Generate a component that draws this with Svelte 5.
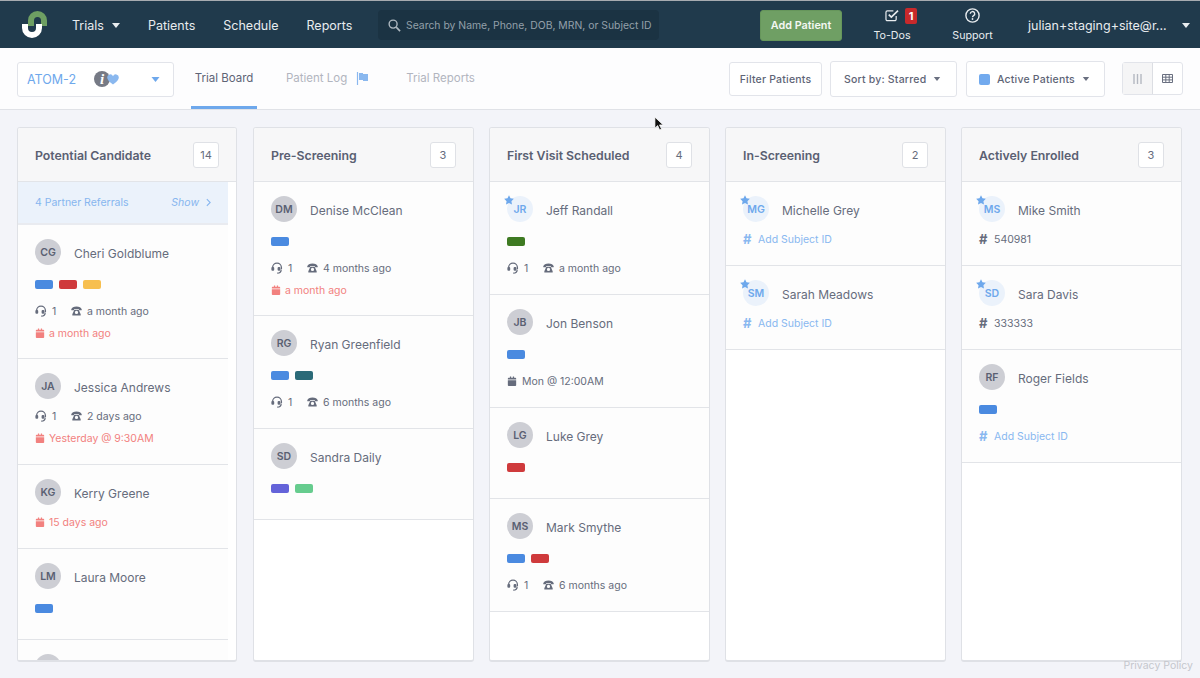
<script>
  const columns = [
    { title: 'Potential Candidate', count: 14, gutter: true, referral: true, cards: [
      { i: 'CG', name: 'Cheri Goldblume', tags: ['blue','red','yellow'], calls: 1, phone: 'a month ago', due: 'a month ago' },
      { i: 'JA', name: 'Jessica Andrews', calls: 1, phone: '2 days ago', due: 'Yesterday @ 9:30AM' },
      { i: 'KG', name: 'Kerry Greene', due: '15 days ago' },
      { i: 'LM', name: 'Laura Moore', tags: ['blue'] },
      { i: '', name: '' }
    ]},
    { title: 'Pre-Screening', count: 3, cards: [
      { i: 'DM', name: 'Denise McClean', tags: ['blue'], calls: 1, phone: '4 months ago', due: 'a month ago' },
      { i: 'RG', name: 'Ryan Greenfield', tags: ['blue','teal'], calls: 1, phone: '6 months ago' },
      { i: 'SD', name: 'Sandra Daily', tags: ['indigo','green'] }
    ]},
    { title: 'First Visit Scheduled', count: 4, cards: [
      { i: 'JR', star: true, name: 'Jeff Randall', tags: ['forest'], calls: 1, phone: 'a month ago' },
      { i: 'JB', name: 'Jon Benson', tags: ['blue'], visit: 'Mon @ 12:00AM' },
      { i: 'LG', name: 'Luke Grey', tags: ['red'] },
      { i: 'MS', name: 'Mark Smythe', tags: ['blue','red'], calls: 1, phone: '6 months ago' }
    ]},
    { title: 'In-Screening', count: 2, cards: [
      { i: 'MG', star: true, name: 'Michelle Grey', addId: true },
      { i: 'SM', star: true, name: 'Sarah Meadows', addId: true }
    ]},
    { title: 'Actively Enrolled', count: 3, cards: [
      { i: 'MS', star: true, name: 'Mike Smith', subject: '540981' },
      { i: 'SD', star: true, name: 'Sara Davis', subject: '333333' },
      { i: 'RF', name: 'Roger Fields', tags: ['blue'], addId: true }
    ]}
  ];
</script>

{#snippet caret()}
  <svg class="caret" viewBox="0 0 8 5" width="8" height="5"><path d="M0 0h8L4 5z" fill="currentColor"/></svg>
{/snippet}
{#snippet calendar()}
  <svg viewBox="0 0 12 12" width="10" height="11"><path fill="currentColor" d="M1 4.500h10v6a1 1 0 0 1-1 1H2a1 1 0 0 1-1-1zM2 1.500h1.500V0h1.500v1.500h2V0h1.500v1.500H10a1 1 0 0 1 1 1v1H1v-1a1 1 0 0 1 1-1z"/></svg>
{/snippet}

<div class="page">
  <header class="top">
    <svg class="logo" viewBox="0 0 26 28" width="26" height="28">
      <path d="M6 15V9.500a9.500 9.500 0 0 1 19 0V15h-6V9.500a3.500 3.500 0 0 0-7 0V15z" fill="#6e9f63"/>
      <path d="M0 13h6v4a4 4 0 0 0 8 0v-4h6v4a10 10 0 0 1-20 0z" fill="#fff"/>
    </svg>
    <nav class="nav">
      <span class="navitem">Trials {@render caret()}</span>
      <span class="navitem">Patients</span>
      <span class="navitem">Schedule</span>
      <span class="navitem">Reports</span>
    </nav>
    <div class="search">
      <svg viewBox="0 0 14 14" width="13" height="13"><circle cx="5.500" cy="5.500" r="4.300" fill="none" stroke="currentColor" stroke-width="1.500"/><path d="M8.800 8.800 13 13" stroke="currentColor" stroke-width="1.800"/></svg>
      <span>Search by Name, Phone, DOB, MRN, or Subject ID</span>
    </div>
    <button class="add">Add Patient</button>
    <div class="hicon todos">
      <div class="iconrow">
        <svg viewBox="0 0 15 14" width="14" height="13"><path d="M12 7.500V11a1.500 1.500 0 0 1-1.500 1.500h-8A1.500 1.500 0 0 1 1 11V3.500A1.500 1.500 0 0 1 2.500 2H9" fill="none" stroke="#e8ecef" stroke-width="1.300"/><path d="M4 6l2.800 2.800L14 1.800" fill="none" stroke="#e8ecef" stroke-width="1.800"/></svg>
        <span class="badge">1</span>
      </div>
      <span>To-Dos</span>
    </div>
    <div class="hicon support">
      <div class="iconrow">
        <svg viewBox="0 0 15 15" width="15" height="15"><circle cx="7.500" cy="7.500" r="6.600" fill="none" stroke="#e8ecef" stroke-width="1.400"/><path d="M5.300 5.800a2.200 2.200 0 1 1 3.300 1.900c-.7.400-1.100.8-1.100 1.500" fill="none" stroke="#e8ecef" stroke-width="1.400"/><circle cx="7.500" cy="11" r=".9" fill="#e8ecef"/></svg>
      </div>
      <span>Support</span>
    </div>
    <div class="user"><span>julian+staging+site@r...</span>{@render caret()}</div>
  </header>

  <div class="sub">
    <div class="trial">
      <span class="trialname">ATOM-2</span>
      <span class="infoheart">
        <span class="info">i</span>
        <svg viewBox="0 0 12 11" width="12" height="11"><path d="M6 10.500C2 7.500.2 5.700.2 3.500A3 3 0 0 1 6 2.300a3 3 0 0 1 5.800 1.200C11.800 5.700 10 7.500 6 10.500z" fill="#8ab8ef"/></svg>
      </span>
      <span class="trialcaret">{@render caret()}</span>
    </div>
    <div class="tabs">
      <span class="tab active">Trial Board</span>
      <span class="tab log">Patient Log
        <svg viewBox="0 0 13 13" width="13" height="13"><path d="M1.500 0v13" stroke="#8ab8ef" stroke-width="1.200"/><path d="M3 1h4v1h5v7H7V8H3z" fill="#8ab8ef"/></svg>
      </span>
      <span class="tab reports">Trial Reports</span>
    </div>
    <div class="tools">
      <button class="tool filter">Filter Patients</button>
      <button class="tool sort">Sort by: Starred {@render caret()}</button>
      <button class="tool status"><i class="swatch"></i>Active Patients {@render caret()}</button>
      <div class="views">
        <span class="view on"><svg viewBox="0 0 9 10" width="9" height="10"><path d="M1 0v10M4.500 0v10M8 0v10" stroke="#b4b8c1" stroke-width="1.400"/></svg></span>
        <span class="view"><svg viewBox="0 0 11 9" width="11" height="9"><path d="M.5.500h10v8H.5zM.5 3.200h10M.5 5.900h10M3.800.500v8M7.200.500v8" fill="none" stroke="#6a7080" stroke-width="1"/></svg></span>
      </div>
    </div>
  </div>

  <main class="board">
    {#each columns as col}
      <section class="col">
        <div class="colhead">
          <h2>{col.title}</h2>
          <span class="count">{col.count}</span>
        </div>
        <div class="list" class:gutter={col.gutter}>
          {#if col.referral}
            <div class="referral">
              <span>4 Partner Referrals</span>
              <em>Show
                <svg viewBox="0 0 6 10" width="5" height="9"><path d="M1 1l4 4-4 4" fill="none" stroke="currentColor" stroke-width="1.300"/></svg>
              </em>
            </div>
          {/if}
          {#each col.cards as c}
            <article class="card">
              <div class="who">
                <span class="avatar" class:starred={c.star}>
                  {c.i}
                  {#if c.star}
                    <svg class="star" viewBox="0 0 12 12" width="10" height="10"><path d="M6 .3l1.800 3.700 4 .6-2.900 2.800.7 4L6 9.500l-3.600 1.900.7-4L.2 4.600l4-.6z" fill="#6ea8ec"/></svg>
                  {/if}
                </span>
                <span class="name">{c.name}</span>
              </div>
              {#if c.tags}
                <div class="tags">
                  {#each c.tags as t}<i class="tag {t}"></i>{/each}
                </div>
              {/if}
              {#if c.calls}
                <div class="row meta">
                  <svg viewBox="0 0 12 12" width="12" height="12"><path d="M1.600 7V5.500a4.400 4.400 0 0 1 8.800 0V7" fill="none" stroke="currentColor" stroke-width="1.300"/><rect x=".4" y="5" width="2.800" height="3.800" rx="1" fill="currentColor"/><rect x="6.600" y="5" width="2.800" height="3.800" rx="1" fill="currentColor"/><path d="M10.200 7.500c0 2.400-1.700 3.700-4 3.700" fill="none" stroke="currentColor" stroke-width="1.200"/></svg>
                  <span class="calls">{c.calls}</span>
                  <svg viewBox="0 0 12 11" width="11" height="10"><path fill="currentColor" d="M.2 3.800C.7 1.700 3 .6 6 .6s5.300 1.100 5.800 3.200c.1.500 0 .9-.6.900H9.300c-.5 0-.7-.3-.7-1.500H3.400c0 1.200-.2 1.500-.7 1.500H.8C.2 4.700.1 4.300.2 3.800zM3.600 4h4.800l2.200 5v1.500H1.400V9zM6 5.300a1.800 1.800 0 1 0 0 3.600 1.800 1.800 0 0 0 0-3.600z"/></svg>
                  <span>{c.phone}</span>
                </div>
              {/if}
              {#if c.due}
                <div class="row due">{@render calendar()}<span>{c.due}</span></div>
              {/if}
              {#if c.visit}
                <div class="row meta">{@render calendar()}<span>{c.visit}</span></div>
              {/if}
              {#if c.addId}
                <div class="row add-id"><b>#</b><span>Add Subject ID</span></div>
              {/if}
              {#if c.subject}
                <div class="row subject"><b>#</b><span>{c.subject}</span></div>
              {/if}
            </article>
          {/each}
        </div>
      </section>
    {/each}
  </main>

  <a class="privacy" href="#privacy">Privacy Policy</a>
  <svg class="cursor" viewBox="0 0 12 17" width="11" height="16"><path d="M1 1v12l3-2.800L6.200 15l2-1-2.200-4.500h4z" fill="#111" stroke="#fff" stroke-width=".8"/></svg>
</div>

<style>
  :global(body) { margin: 0; background: #f3f4f9; }
  .page {
    position: relative;
    width: 1200px;
    height: 678px;
    overflow: hidden;
    background: #f3f4f9;
    font-family: Inter, "Liberation Sans", sans-serif;
    font-size: 11px;
    color: #5e6476;
  }
  button { font-family: inherit; cursor: pointer; }

  .top {
    height: 48px;
    box-sizing: border-box;
    border-top: 1px solid #a7abb0;
    padding-top: 1px;
    background: #203a4c;
    display: flex;
    align-items: center;
    color: #e8ecef;
    font-size: 12.500px;
  }
  .logo { margin-left: 22px; flex: none; }
  .nav { display: flex; gap: 28px; margin-left: 24px; width: 306px; flex: none; }
  .navitem { display: inline-flex; align-items: center; gap: 6px; white-space: nowrap; }
  .navitem .caret { margin-left: 2px; }
  .search {
    width: 281px;
    height: 30px;
    flex: none;
    box-sizing: border-box;
    background: #1b3343;
    border-radius: 4px;
    display: flex;
    align-items: center;
    gap: 5px;
    padding-left: 10px;
    font-size: 10.400px;
    color: #93a0aa;
    white-space: nowrap;
  }
  .search svg { color: #aeb8c0; flex: none; }
  .add {
    margin-left: 101px;
    width: 82px;
    height: 31px;
    flex: none;
    border: 1px solid #66965b;
    border-radius: 3px;
    background: #6f9f64;
    color: #f4f7f3;
    font-size: 10.800px;
    font-weight: 600;
    padding: 0;
  }
  .hicon {
    display: flex;
    flex-direction: column;
    align-items: center;
    font-size: 10.700px;
    gap: 4px;
    white-space: nowrap;
    padding-top: 1px;
    margin-bottom: 3px;
    flex: none;
  }
  .iconrow { height: 18px; display: flex; align-items: center; gap: 6px; }
  .todos { margin-left: 31px; width: 38px; }
  .todos .iconrow { margin-left: 18px; }
  .support { margin-left: 41px; width: 41px; }
  .badge {
    background: #c8292b;
    color: #fff;
    font-size: 11px;
    font-weight: 700;
    width: 12px;
    height: 16px;
    border-radius: 2px;
    display: flex;
    align-items: center;
    justify-content: center;
  }
  .user { margin-left: 35px; display: flex; align-items: center; gap: 15px; white-space: nowrap; }

  .sub {
    height: 62px;
    box-sizing: border-box;
    background: #fdfdfe;
    border-bottom: 1px solid #e0e2e7;
    display: flex;
    align-items: center;
    padding: 0 17px;
  }
  .trial {
    width: 157px;
    height: 35px;
    box-sizing: border-box;
    border: 1px solid #e2e4ea;
    border-radius: 3px;
    background: #fff;
    display: flex;
    align-items: center;
    padding-left: 9px;
    margin-top: 1px;
    color: #6ea8ec;
    font-size: 12.500px;
  }
  .trialname { width: 67px; }
  .infoheart { display: flex; align-items: center; width: 57px; }
  .info {
    width: 16px;
    height: 16px;
    border-radius: 50%;
    background: #767a85;
    color: #fff;
    font: italic 700 15px/16px "Liberation Serif", serif;
    text-align: center;
  }
  .infoheart svg { margin-left: -3px; }
  .trialcaret { display: flex; color: #6ea8ec; }
  .trialcaret .caret { width: 9px; }
  .tabs { display: flex; align-self: stretch; margin-left: 17px; font-size: 11.500px; color: #b2b5bf; }
  .tab { display: flex; align-items: center; box-sizing: border-box; padding-bottom: 1px; white-space: nowrap; }
  .tab.active {
    color: #5e6476;
    width: 66px;
    justify-content: center;
    border-bottom: 3px solid #6ea8ec;
    padding: 2px 0 0;
  }
  .tab.log { margin-left: 29px; gap: 9px; }
  .tab.reports { margin-left: 37px; }
  .tools { margin-left: auto; display: flex; align-items: center; letter-spacing: .2px; }
  .tool {
    height: 34px;
    box-sizing: border-box;
    background: #fff;
    border: 1px solid #e2e4ea;
    border-radius: 3px;
    color: #5e6476;
    font-size: 10.500px;
    font-weight: 500;
    letter-spacing: .2px;
    display: flex;
    align-items: center;
    padding: 1px 0 0;
    white-space: nowrap;
  }
  .tool .caret { width: 8px; height: 4px; color: #6a7080; }
  .filter { width: 93px; justify-content: center; }
  .sort { width: 127px; height: 36px; margin-left: 8px; padding-left: 13px; gap: 7px; }
  .status { width: 139px; height: 36px; margin-left: 9px; padding-left: 12px; gap: 7px; }
  .swatch { width: 11px; height: 11px; border-radius: 2px; background: #72aaee; margin-right: 0; }
  .views {
    margin-left: 17px;
    width: 61px;
    height: 33px;
    box-sizing: border-box;
    border: 1px solid #e2e4ea;
    border-radius: 3px;
    display: flex;
    background: #fff;
  }
  .view { flex: 1; display: flex; align-items: center; justify-content: center; }
  .view.on { background: #f5f5f6; border-right: 1px solid #dcdee3; }

  .board { display: flex; gap: 15px; padding: 17px 0 0 17px; }
  .col {
    width: 221px;
    height: 535px;
    box-sizing: border-box;
    flex: none;
    border: 1px solid #dfe1e6;
    border-bottom-width: 2px;
    border-radius: 3px;
    background: #fff;
    overflow: hidden;
    display: flex;
    flex-direction: column;
  }
  .col:first-child { width: 220px; margin-right: 1px; }
  .colhead {
    height: 54px;
    flex: none;
    box-sizing: border-box;
    background: #f7f7f8;
    border-bottom: 1px solid #e2e4e8;
    display: flex;
    align-items: center;
    justify-content: space-between;
    padding: 1px 17px 0;
  }
  h2 { margin: 0; font-size: 12.300px; font-weight: 600; color: #5a6072; white-space: nowrap; }
  .count {
    width: 26px;
    height: 26px;
    box-sizing: border-box;
    border: 1px solid #dfe1e6;
    border-radius: 3px;
    background: #fff;
    display: flex;
    align-items: center;
    justify-content: center;
    font-size: 11px;
    color: #666c7c;
  }
  .list { flex: 1; overflow: hidden; }
  .list.gutter { margin-right: 8px; }
  .referral {
    height: 43px;
    box-sizing: border-box;
    background: #ebf2fb;
    border-bottom: 2px solid #e9ebf0;
    display: flex;
    align-items: center;
    justify-content: space-between;
    padding: 0 17px;
    color: #87b6ef;
    font-size: 10.500px;
  }
  .referral em { display: flex; align-items: center; gap: 7px; }
  .card {
    box-sizing: border-box;
    background: #fdfdfd;
    padding: 14px 17px 18px;
    border-bottom: 1px solid #e2e4e8;
  }
  .who { display: flex; height: 26px; align-items: center; }
  .avatar {
    position: relative;
    width: 26px;
    height: 26px;
    flex: none;
    border-radius: 50%;
    background: #cdced4;
    color: #5a6072;
    font-size: 10.500px;
    font-weight: 600;
    display: flex;
    align-items: center;
    justify-content: center;
  }
  .avatar.starred { background: #ebf2fb; color: #6ea8ec; }
  .star { position: absolute; left: -3px; top: -1px; }
  .name { margin-left: 13px; padding-top: 3px; font-size: 12px; color: #666c7c; white-space: nowrap; }
  .tags { display: flex; gap: 6px; margin-top: 15px; height: 10px; }
  .tags:last-child { margin-bottom: 7px; }
  .tag { width: 18px; height: 9px; border-radius: 2px; background: #4a8ae0; }
  .tag.red { background: #cf3a3c; }
  .tag.yellow { background: #f7bf4f; }
  .tag.teal { background: #2b6a78; }
  .tag.indigo { background: #6463d9; }
  .tag.green { background: #66cc8e; }
  .tag.forest { background: #3e7a22; }
  .row { display: flex; align-items: center; height: 16px; margin-top: 9px; font-size: 10.500px; white-space: nowrap; }
  .tags + .row { margin-top: 13px; }
  .row + .row { margin-top: 6px; margin-bottom: -1px; }
  .list.gutter .card:nth-of-type(2) .row + .row { margin-bottom: 0; }
  .meta { color: #666c7c; gap: 5px; }
  .meta .calls { width: 14px; }
  .due { color: #f2817f; gap: 4px; }
  .add-id { color: #89b8f0; gap: 6px; }
  .subject { color: #666c7c; gap: 6px; }
  .row b { font-size: 13px; font-weight: 700; width: 9px; }
  .privacy {
    position: absolute;
    right: 7px;
    bottom: 6px;
    color: #c5c7cd;
    font-size: 10.500px;
    text-decoration: none;
  }
  .cursor { position: absolute; left: 654px; top: 116px; }
</style>
